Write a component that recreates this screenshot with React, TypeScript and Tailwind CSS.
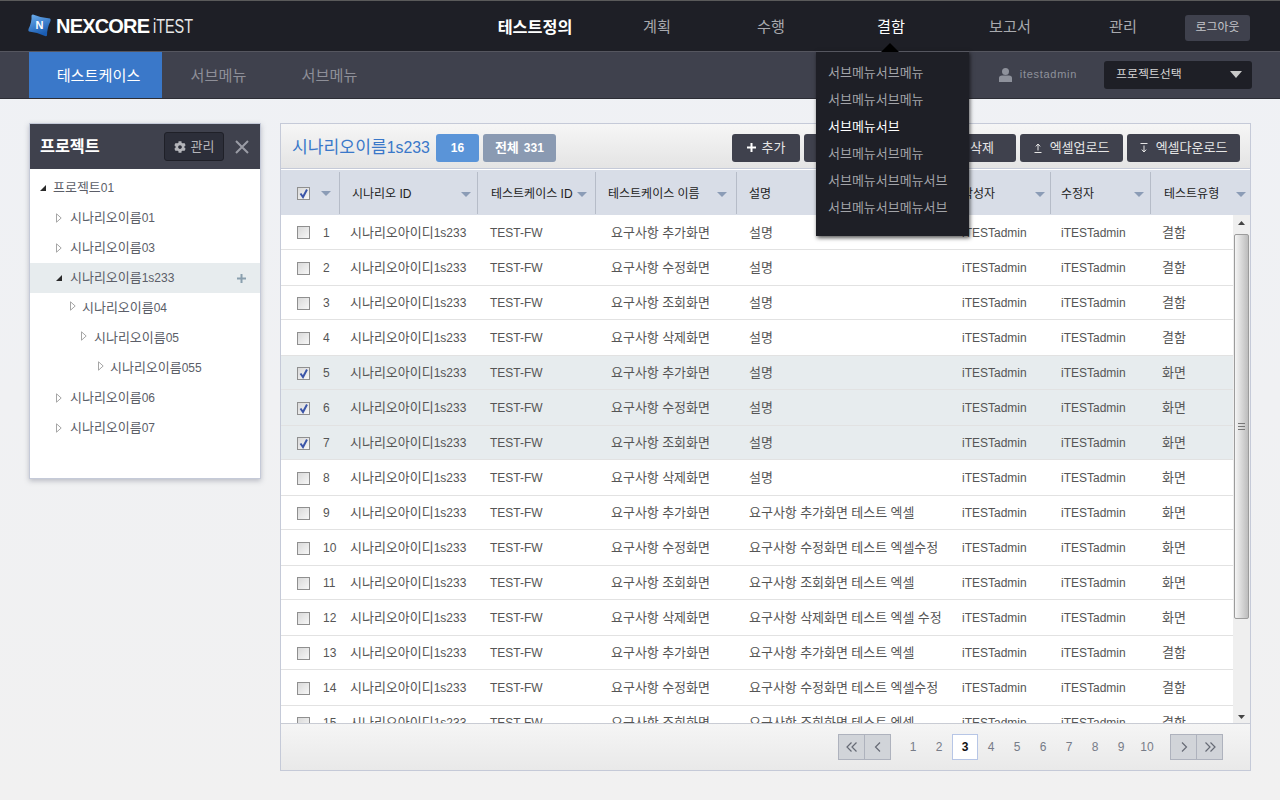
import React from "react";
import { FaCog } from "react-icons/fa";

function K({ children }: { children: string }) {
  const parts = children.split(/([\u3131-\uD79D]+)/);
  return (
    <span className="whitespace-nowrap">
      {parts.map((p, i) =>
        /[\u3131-\uD79D]/.test(p) ? (
          <span key={i} className="text-[1.083em]">{p}</span>
        ) : (
          <span key={i}>{p}</span>
        )
      )}
    </span>
  );
}

function Check({ on }: { on?: boolean }) {
  return (
    <span className="relative block h-[13px] w-[13px] border border-[#8f8f8f] bg-gradient-to-br from-[#d9d9d9] to-[#f7f7f7]">
      {on && (
        <svg viewBox="0 0 13 13" className="absolute -left-px -top-px h-[13px] w-[13px]">
          <path d="M3.5 6.5 L6 10 L10 2.5" fill="none" stroke="#3b55a8" strokeWidth="2" />
        </svg>
      )}
    </span>
  );
}

function Sort() {
  return (
    <svg viewBox="0 0 10 5" className="h-[5px] w-[10px] shrink-0">
      <path d="M0 0H10L5 5Z" fill="#8b9cb6" />
    </svg>
  );
}

function Open() {
  return (
    <svg viewBox="0 0 6 6" className="h-[6px] w-[6px] shrink-0">
      <path d="M0 6L6 0V6Z" fill="#2a2a2a" />
    </svg>
  );
}

function Closed({ cls }: { cls?: string }) {
  return (
    <svg viewBox="0 0 6 10" className={`h-[10px] w-[6px] shrink-0 ${cls ?? ""}`}>
      <path d="M0.5 0.8L5.2 5L0.5 9.2Z" fill="#fff" stroke="#a5a5a5" />
    </svg>
  );
}

const tree = [
  { t: "프로젝트01", ico: "o", cls: "pl-[10px]", gap: "w-[7px]" },
  { t: "시나리오이름01", ico: "c", cls: "pl-[26px]", gap: "w-[8px]" },
  { t: "시나리오이름03", ico: "c", cls: "pl-[26px]", gap: "w-[8px]" },
  { t: "시나리오이름1s233", ico: "o", cls: "pl-[26px]", gap: "w-[8px]", active: true },
  { t: "시나리오이름04", ico: "c", cls: "pl-[40px]", gap: "w-[6px]", up: true },
  { t: "시나리오이름05", ico: "c", cls: "pl-[51px]", gap: "w-[7px]", up: true },
  { t: "시나리오이름055", ico: "c", cls: "pl-[68px]", gap: "w-[6px]", up: true },
  { t: "시나리오이름06", ico: "c", cls: "pl-[26px]", gap: "w-[8px]" },
  { t: "시나리오이름07", ico: "c", cls: "pl-[26px]", gap: "w-[8px]" },
];

const headers = [
  { t: "시나리오 ID", w: "w-[138px]", cls: "pl-[12px] pr-[6px]" },
  { t: "테스트케이스 ID", w: "w-[118px]", cls: "pl-[13px] pr-[8px]" },
  { t: "테스트케이스 이름", w: "w-[141px]", cls: "pl-[12px] pr-[9px]" },
  { t: "설명", w: "w-[213px]", cls: "pl-[12px] pr-[9px]" },
  { t: "작성자", w: "w-[101px]", cls: "pl-[12px] pr-[5px]" },
  { t: "수정자", w: "w-[100px]", cls: "pl-[10px] pr-[6px]" },
];

const names = ["추가", "수정", "조회", "삭제"];
const descs: Record<number, string> = {
  9: "요구사항 추가화면 테스트 엑셀",
  10: "요구사항 수정화면 테스트 엑셀수정",
  11: "요구사항 조회화면 테스트 엑셀",
  12: "요구사항 삭제화면 테스트 엑셀 수정",
  13: "요구사항 추가화면 테스트 엑셀",
  14: "요구사항 수정화면 테스트 엑셀수정",
  15: "요구사항 조회화면 테스트 엑셀",
};
const rows = Array.from({ length: 15 }, (_, i) => {
  const n = i + 1;
  return {
    n,
    name: `요구사항 ${names[i % 4]}화면`,
    desc: descs[n] ?? "설명",
    type: n >= 5 && n <= 12 ? "화면" : "결함",
    sel: n >= 5 && n <= 7,
    h: n % 2 === 0 ? "h-[36px]" : "h-[34px]",
  };
});

const menu = [
  { t: "서브메뉴서브메뉴" },
  { t: "서브메뉴서브메뉴" },
  { t: "서브메뉴서브", on: true },
  { t: "서브메뉴서브메뉴" },
  { t: "서브메뉴서브메뉴서브" },
  { t: "서브메뉴서브메뉴서브" },
];

function PageBtn({ d, cls }: { d: string; cls?: string }) {
  return (
    <span className={`flex h-[26px] w-[27px] items-center justify-center border border-[#aeb2bd] bg-[#d1d4d9] ${cls ?? ""}`}>
      <svg viewBox="0 0 14 12" className="h-[12px] w-[14px]">
        <path d={d} fill="none" stroke="#666a75" strokeWidth="1.2" />
      </svg>
    </span>
  );
}

function ToolBtn({ children, cls }: { children: React.ReactNode; cls: string }) {
  return (
    <button className={`flex h-[28px] items-center justify-center rounded-[3px] bg-[#3f414d] text-[12px] text-[#e6e6e6] ${cls}`}>
      {children}
    </button>
  );
}

export default function App() {
  return (
    <div className="relative flex h-[800px] w-[1280px] flex-col overflow-hidden bg-gradient-to-b from-[#eff1f5] to-[#f1f1f1] font-['Liberation_Sans','Noto_Sans_CJK_KR',sans-serif] text-[12px]">
      {/* top bar */}
      <header className="flex h-[52px] shrink-0 items-center border-y border-t-[#5a5a5a] border-b-[#55565f] bg-[#1e1f26] pt-[2px]">
        <div className="-mt-[3px] flex w-[475px] items-center pl-[28px]">
          <span className="relative flex h-[23px] w-[23px] items-center justify-center text-[11px] font-bold text-white">
            <svg viewBox="0 0 23 23" className="absolute inset-0 h-[23px] w-[23px]">
              <defs>
                <linearGradient id="lg" x1="0" y1="0" x2="0.4" y2="1">
                  <stop offset="0" stopColor="#6fb0ee" />
                  <stop offset="1" stopColor="#1a5cb2" />
                </linearGradient>
              </defs>
              <path d="M5 0.5Q13 4 22 4.5Q23 5 22.5 7Q19 14 19 21.5Q18.5 22.5 17 22Q9 18 1 17.5Q0 17 0.5 15Q4 8 3.5 1.5Q4 0.5 5 0.5Z" fill="url(#lg)" />
            </svg>
            <span className="relative">N</span>
          </span>
          <span className="ml-[5px] w-[97px] text-[20px] font-bold tracking-[-0.8px] text-white">NEXCORE</span>
          <span className="origin-left scale-x-[0.72] text-[20px] text-[#e8e8e8]">iTEST</span>
        </div>
        <nav className="flex items-center text-[14px] text-[#a8a9ae]">
          <span className="w-[120px] text-center text-[15px] font-bold text-white"><K>테스트정의</K></span>
          <span className="w-[124px] text-center"><K>계획</K></span>
          <span className="w-[104px] text-center"><K>수행</K></span>
          <span className="w-[136px] text-center text-white"><K>결함</K></span>
          <span className="w-[102px] text-center"><K>보고서</K></span>
          <span className="w-[124px] text-center"><K>관리</K></span>
        </nav>
        <button className="mt-[1px] h-[26px] w-[65px] rounded-[3px] bg-[#3f414d] text-[11px] text-[#c4c5ca]"><K>로그아웃</K></button>
      </header>
      {/* sub bar */}
      <div className="flex h-[47px] shrink-0 items-stretch border-b border-[#2c2d35] bg-[#3f414d] pl-[29px] pr-[28px]">
        <span className="flex w-[133px] items-center justify-center bg-[#3a78c9] pl-[6px] pt-[3px] text-[14px] text-white"><K>테스트케이스</K></span>
        <span className="flex w-[111px] items-center justify-center pl-[2px] pt-[3px] text-[14px] text-[#8e8f98]"><K>서브메뉴</K></span>
        <span className="flex w-[111px] items-center justify-center pl-[2px] pt-[3px] text-[14px] text-[#8e8f98]"><K>서브메뉴</K></span>
        <div className="ml-auto -mt-[1px] flex items-center">
          <svg viewBox="0 0 13 14" className="h-[14px] w-[13px]">
            <circle cx="6.5" cy="3.5" r="3.5" fill="#8e919b" />
            <path d="M0 14V10Q0 7.5 3 7.5H10Q13 7.5 13 10V14Z" fill="#8e919b" />
          </svg>
          <span className="ml-[8px] text-[11px] tracking-[0.7px] text-[#8e919b]">itestadmin</span>
          <div className="ml-[27px] flex h-[28px] w-[148px] items-center justify-between rounded-[3px] bg-[#1e1f26] pl-[12px] pr-[10px] text-[11px] text-[#d6d6d6]">
            <K>프로젝트선택</K>
            <svg viewBox="0 0 12 7" className="h-[7px] w-[12px]"><path d="M0 0H12L6 7Z" fill="#c8c8c8" /></svg>
          </div>
        </div>
      </div>
      {/* content */}
      <main className="flex flex-1 items-start gap-[19px] pl-[29px] pt-[24px]">
        <aside className="flex h-[356px] w-[232px] shrink-0 flex-col border border-[#c5cad8] bg-white shadow-[0_2px_5px_rgba(120,125,140,0.45)]">
          <div className="flex h-[45px] shrink-0 items-center bg-[#3f414d] pl-[10px] pr-[11px]">
            <span className="text-[15px] font-bold text-white"><K>프로젝트</K></span>
            <button className="ml-auto flex h-[29px] w-[60px] items-center justify-center gap-[5px] rounded-[3px] border border-[#1f2028] bg-[#2c2e39] text-[12px] text-[#b4b5ba]">
              <FaCog className="h-[12px] w-[12px]" />
              <K>관리</K>
            </button>
            <svg viewBox="0 0 14 14" className="ml-[11px] h-[14px] w-[14px]">
              <path d="M1 1L13 13M13 1L1 13" stroke="#9a9ca5" strokeWidth="2" />
            </svg>
          </div>
          <ul className="pt-[4px] text-[12px] text-[#5b5e68]">
            {tree.map((r) => (
              <li key={r.t} className={`flex h-[30px] items-center ${r.cls} ${r.active ? "bg-[#e7ecee]" : ""}`}>
                {r.ico === "o" ? <Open /> : <Closed cls={r.up ? "-mt-[5px]" : ""} />}
                <span className={r.gap} />
                <K>{r.t}</K>
                {r.active && (
                  <svg viewBox="0 0 9 9" className="ml-auto mr-[14px] h-[9px] w-[9px]">
                    <path d="M4.5 0V9M0 4.5H9" stroke="#8a9fae" strokeWidth="2" />
                  </svg>
                )}
              </li>
            ))}
          </ul>
        </aside>

        <section className="flex h-[648px] w-[971px] shrink-0 flex-col border border-[#c5cad8] bg-white">
          <div className="flex h-[45px] shrink-0 items-center border-b border-[#c5cad8] bg-gradient-to-b from-[#f6f6f6] to-[#e4e4e4] pl-[11px] pr-[10px] pt-[3px]">
            <span className="text-[15.85px] text-[#3a78c9]"><K>시나리오이름1s233</K></span>
            <span className="ml-[6px] flex h-[28px] w-[43px] items-center justify-center rounded-[3px] bg-[#5a94d8] font-bold text-white">16</span>
            <span className="ml-[4px] flex h-[28px] w-[73px] items-center justify-center gap-[5px] rounded-[3px] bg-[#8a9ab2] font-bold text-white"><K>전체</K><span>331</span></span>
            <div className="ml-auto flex gap-[4px]">
              <ToolBtn cls="w-[68px] gap-[6px]">
                <svg viewBox="0 0 9 9" className="h-[9px] w-[9px]"><path d="M4.5 0V9M0 4.5H9" stroke="#fff" strokeWidth="2" /></svg>
                <K>추가</K>
              </ToolBtn>
              <ToolBtn cls="w-[68px]"><K>수정</K></ToolBtn>
              <ToolBtn cls="w-[68px]"><K>복사</K></ToolBtn>
              <ToolBtn cls="w-[68px]"><K>삭제</K></ToolBtn>
              <ToolBtn cls="w-[103px] gap-[8px]">
                <svg viewBox="0 0 8 10" className="h-[10px] w-[8px]"><path d="M4 7.5V1M1.8 3.4L4 1L6.2 3.4M0.5 9.5H7.5" fill="none" stroke="#e6e6e6" /></svg>
                <K>엑셀업로드</K>
              </ToolBtn>
              <ToolBtn cls="w-[113px] gap-[8px]">
                <svg viewBox="0 0 8 10" className="h-[10px] w-[8px]"><path d="M4 2.5V9M1.8 6.6L4 9L6.2 6.6M0.5 0.5H7.5" fill="none" stroke="#e6e6e6" /></svg>
                <K>엑셀다운로드</K>
              </ToolBtn>
            </div>
          </div>
          {/* table head */}
          <div className="mt-px flex h-[45px] shrink-0 items-center bg-[#d8dde7] text-[#222]">
            <div className="flex h-[42px] w-[59px] items-center border-r border-[#b6bcc8] pl-[16px] pt-[2px]">
              <Check on />
              <span className="ml-[11px]"><Sort /></span>
            </div>
            {headers.map((h) => (
              <div key={h.t} className={`flex h-[42px] items-center justify-between border-r border-[#b6bcc8] pt-[3px] ${h.w} ${h.cls}`}>
                <span className="whitespace-nowrap">{h.t}</span>
                <Sort />
              </div>
            ))}
            <div className="flex h-[42px] flex-1 items-center justify-between pl-[13px] pr-[4px] pt-[3px]">
              <span className="whitespace-nowrap">테스트유형</span>
              <Sort />
            </div>
          </div>
          {/* table body */}
          <div className="flex h-[508px] shrink-0">
            <div className="flex-1 overflow-hidden">
              <table className="w-[952px] table-fixed text-[#555]">
                <colgroup>
                  <col className="w-[59px]" />
                  <col className="w-[138px]" />
                  <col className="w-[118px]" />
                  <col className="w-[141px]" />
                  <col className="w-[213px]" />
                  <col className="w-[101px]" />
                  <col className="w-[100px]" />
                  <col className="w-[82px]" />
                </colgroup>
                <tbody>
                  {rows.map((r) => (
                    <tr key={r.n} className={`border-b border-[#e2e2e2] ${r.h} ${r.sel ? "bg-[#e7ecee]" : ""}`}>
                      <td className="pl-[16px] pt-[2px]">
                        <div className="flex items-center">
                          <Check on={r.sel} />
                          <span className="ml-[13px]">{r.n}</span>
                        </div>
                      </td>
                      <td className="pl-[10px] pt-[2px]"><K>시나리오아이디1s233</K></td>
                      <td className="pl-[12px] pt-[2px]">TEST-FW</td>
                      <td className="pl-[15px] pt-[2px]"><K>{r.name}</K></td>
                      <td className="pl-[12px] pt-[2px]"><K>{r.desc}</K></td>
                      <td className="pl-[12px] pt-[2px]">iTESTadmin</td>
                      <td className="pl-[10px] pt-[2px]">iTESTadmin</td>
                      <td className="pl-[11px] pt-[2px]"><K>{r.type}</K></td>
                    </tr>
                  ))}
                </tbody>
              </table>
            </div>
            {/* scrollbar */}
            <div className="flex w-[17px] shrink-0 flex-col items-center bg-[#efefef]">
              <svg viewBox="0 0 7 4" className="mt-[6px] h-[4px] w-[7px]"><path d="M0 4H7L3.5 0Z" fill="#444" /></svg>
              <div className="mt-[9px] flex h-[385px] w-[15px] items-center justify-center rounded-[2px] border border-[#9c9c9c] bg-gradient-to-r from-[#f5f5f5] to-[#bdbdbd]">
                <svg viewBox="0 0 7 7" className="h-[7px] w-[7px]"><path d="M0 .5H7M0 3.5H7M0 6.5H7" stroke="#777" /></svg>
              </div>
              <svg viewBox="0 0 7 4" className="mb-[4px] mt-auto h-[4px] w-[7px]"><path d="M0 0H7L3.5 4Z" fill="#444" /></svg>
            </div>
          </div>
          {/* pager */}
          <div className="flex flex-1 items-center justify-end border-t border-[#c9ccd4] bg-gradient-to-b from-[#f5f5f5] to-[#e9e9e9] pr-[27px]">
            <PageBtn d="M6.5 1.5L2 6L6.5 10.5M11.5 1.5L7 6L11.5 10.5" />
            <PageBtn cls="-ml-px" d="M9 1.5L4.5 6L9 10.5" />
            <div className="ml-[9px] flex text-[#777c88]">
              {[1, 2, 3, 4, 5, 6, 7, 8, 9, 10].map((n) =>
                n === 3 ? (
                  <span key={n} className="flex h-[26px] w-[26px] items-center justify-center border border-[#b7c6e6] bg-white font-bold text-[#111]">{n}</span>
                ) : (
                  <span key={n} className="flex h-[26px] w-[26px] items-center justify-center">{n}</span>
                )
              )}
            </div>
            <div className="ml-[10px] flex">
              <PageBtn d="M5 1.5L9.5 6L5 10.5" />
              <PageBtn cls="-ml-px" d="M2.5 1.5L7 6L2.5 10.5M7.5 1.5L12 6L7.5 10.5" />
            </div>
          </div>
        </section>
      </main>

      {/* dropdown menu */}
      <div className="absolute left-[816px] top-[51px] h-[185px] w-[153px] border-t border-[#55565f] bg-[#1e1f26] pl-[12px] pt-[7px] text-[12px] text-[#a3a4a9] shadow-[1px_2px_4px_rgba(0,0,0,0.65)]">
        <svg viewBox="0 0 18 9" className="absolute left-[65px] -top-[9px] h-[9px] w-[18px]"><path d="M0 9L9 0L18 9Z" fill="#000" /></svg>
        {menu.map((m, i) => (
          <div key={i} className={`flex h-[27px] items-center ${m.on ? "text-white" : ""}`}><K>{m.t}</K></div>
        ))}
      </div>
    </div>
  );
}
